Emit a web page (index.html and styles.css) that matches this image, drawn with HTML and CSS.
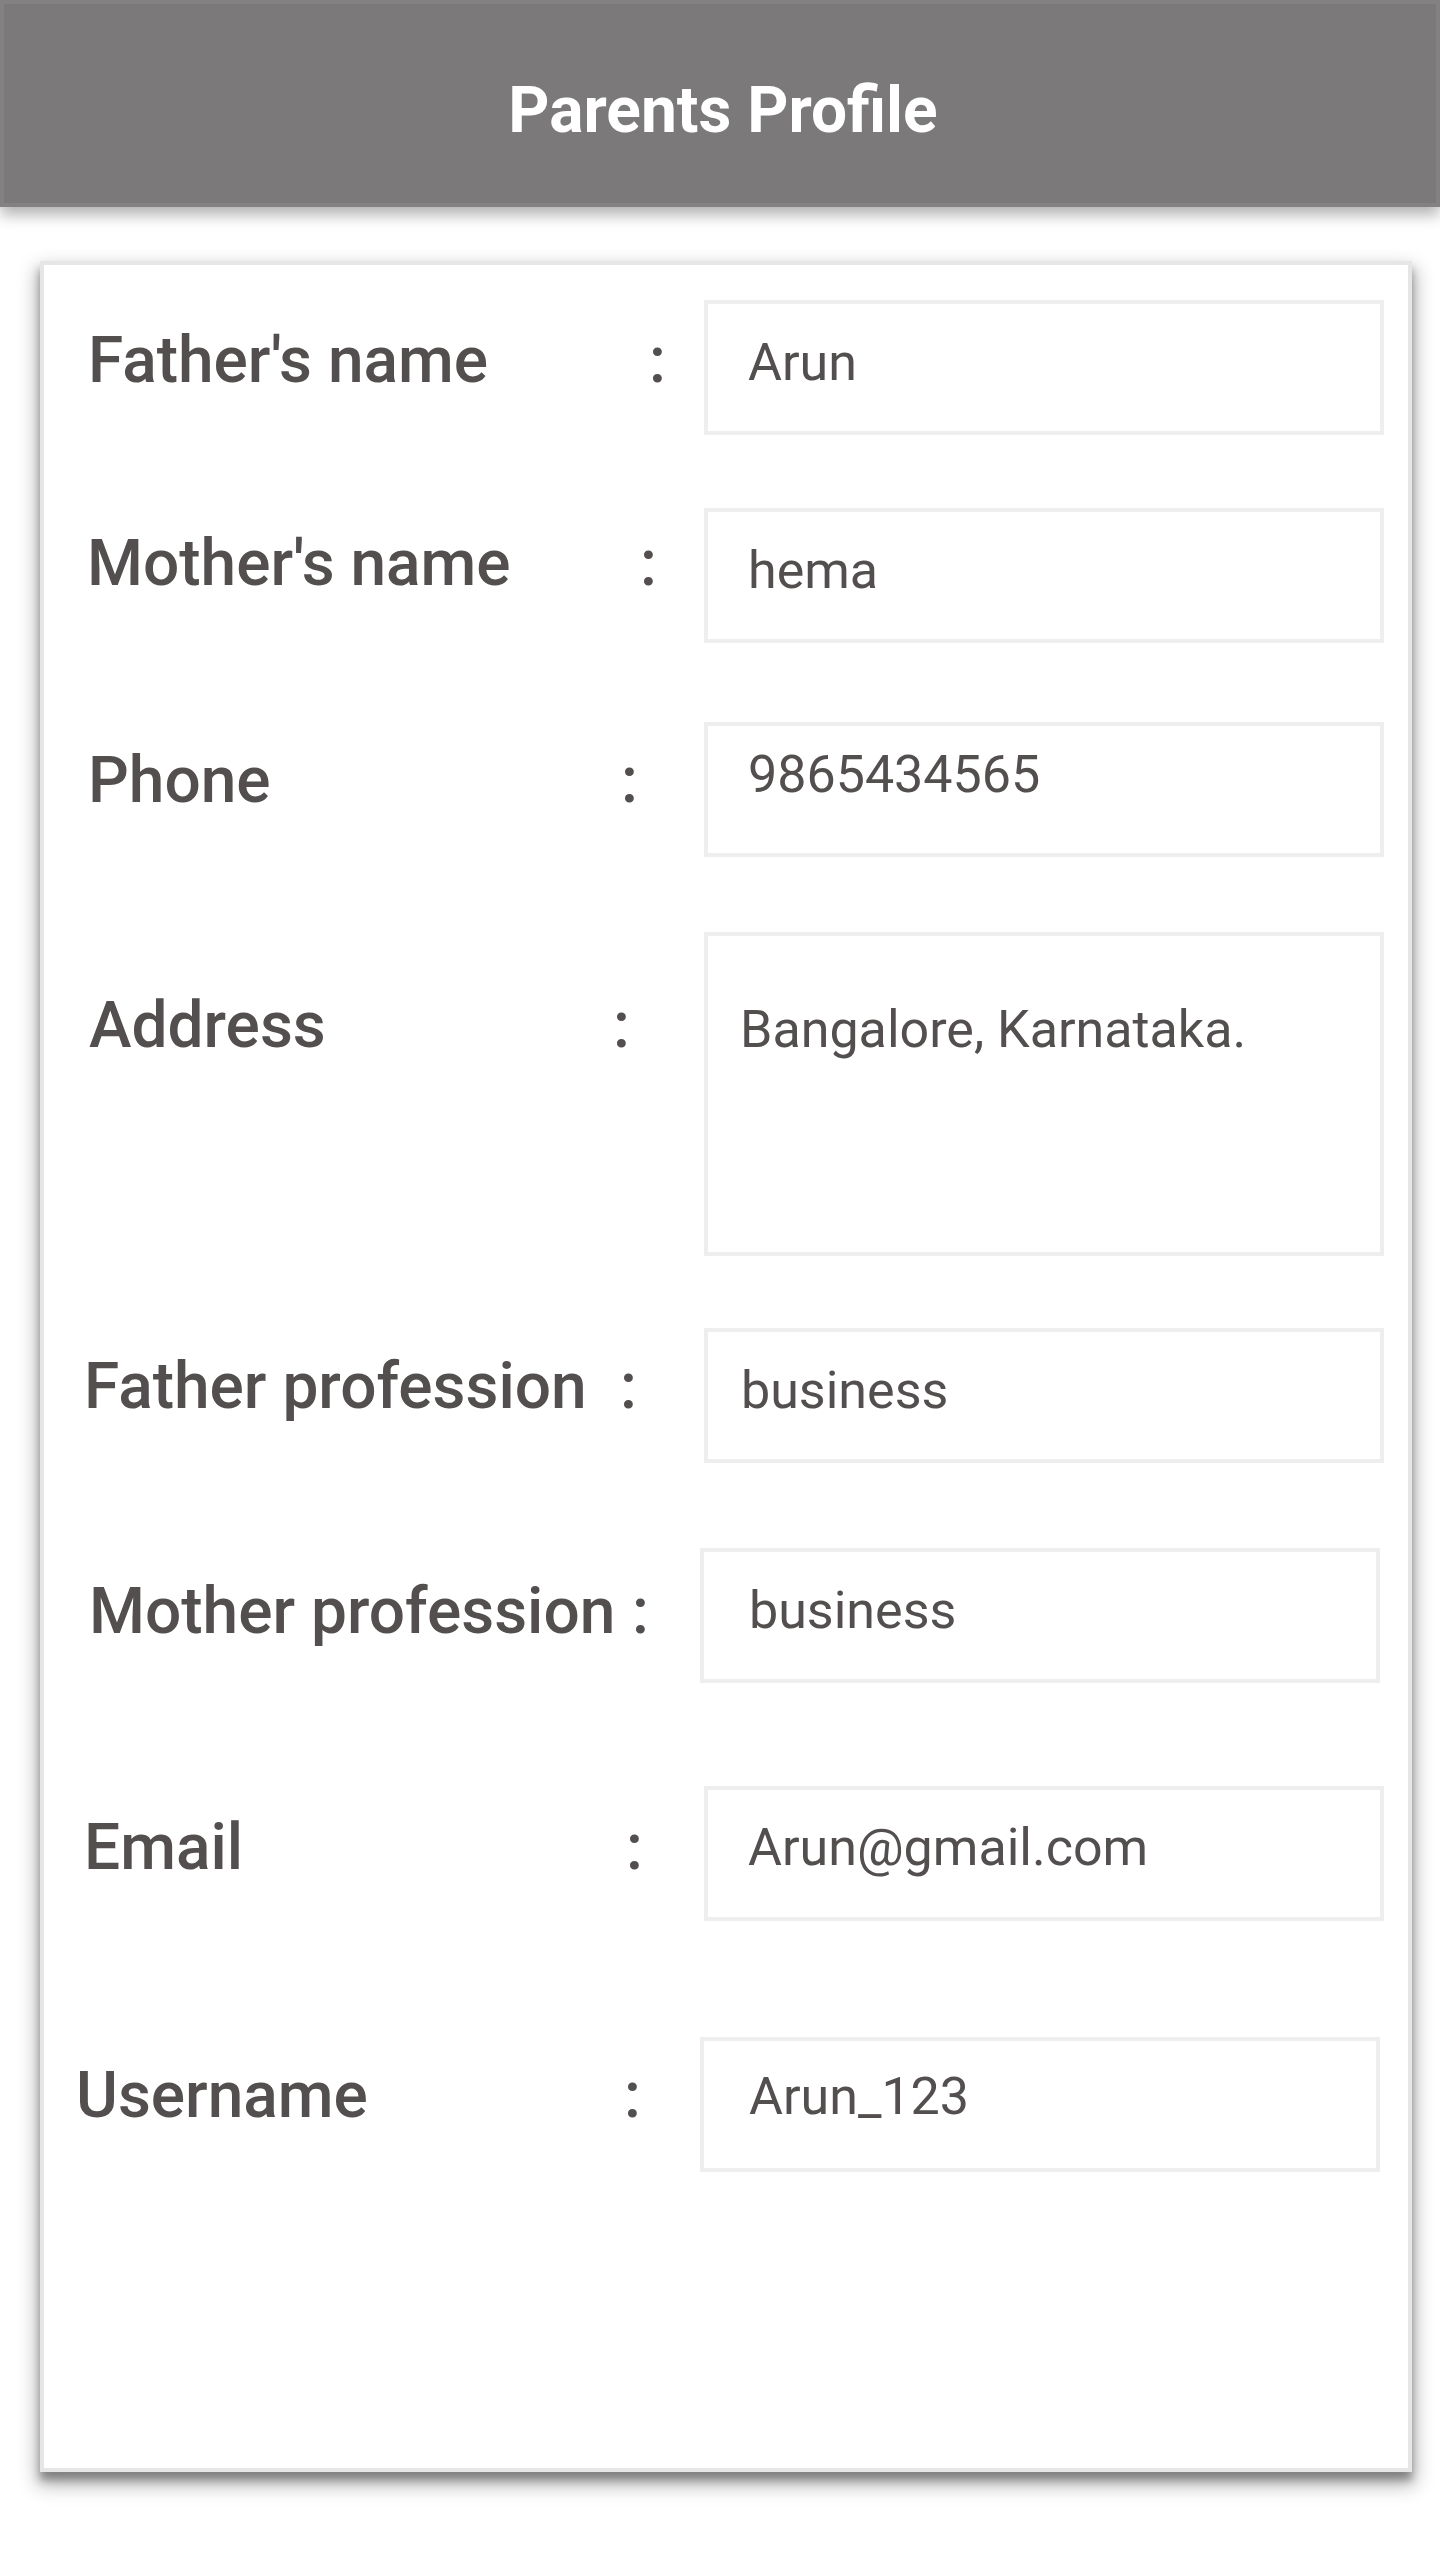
FILE: index.html
```html
<!DOCTYPE html>
<html lang="en">
<head>
<meta charset="utf-8">
<title>Parents Profile</title>
<link rel="stylesheet" href="styles.css">
</head>
<body>
<header class="appbar">
  <h1 class="appbar-title">Parents Profile</h1>
</header>
<main class="card">
  <div class="row r1">
    <span class="label">Father's name</span><span class="colon">:</span>
    <div class="field">Arun</div>
  </div>
  <div class="row r2">
    <span class="label">Mother's name</span><span class="colon">:</span>
    <div class="field">hema</div>
  </div>
  <div class="row r3">
    <span class="label">Phone</span><span class="colon">:</span>
    <div class="field">9865434565</div>
  </div>
  <div class="row r4">
    <span class="label">Address</span><span class="colon">:</span>
    <div class="field field-multi">Bangalore, Karnataka.</div>
  </div>
  <div class="row r5">
    <span class="label">Father profession</span><span class="colon">:</span>
    <div class="field">business</div>
  </div>
  <div class="row r6">
    <span class="label">Mother profession</span><span class="colon">:</span>
    <div class="field">business</div>
  </div>
  <div class="row r7">
    <span class="label">Email</span><span class="colon">:</span>
    <div class="field">Arun@gmail.com</div>
  </div>
  <div class="row r8">
    <span class="label">Username</span><span class="colon">:</span>
    <div class="field">Arun_123</div>
  </div>
</main>
</body>
</html>
```

FILE: styles.css
```css
* { box-sizing: border-box; }

html, body {
  margin: 0;
  padding: 0;
  background: #ffffff;
}

body {
  font-family: Roboto, "Liberation Sans", Arial, sans-serif;
  color: #524f4e;
  min-height: 2560px;
  padding-bottom: 88px;
}

.appbar {
  height: 207px;
  background: #7b7979;
  border: 4px solid #838181;
  box-shadow: 0 8px 14px rgba(0, 0, 0, 0.3);
  padding-top: 69px;
  padding-left: 6px;
  text-align: center;
  position: relative;
  z-index: 1;
}

.appbar-title {
  margin: 0;
  font-size: 64px;
  line-height: 75px;
  font-weight: 700;
  color: #ffffff;
}

.card {
  display: block;
  margin: 54px 0 0 40px;
  width: 1372px;
  height: 2211px;
  background: #ffffff;
  border: 4px solid #e6e6e6;
  box-shadow: 0 10px 18px 3px rgba(0, 0, 0, 0.3), 0 8px 8px rgba(0, 0, 0, 0.3);
  padding-top: 35px;
}

.row {
  display: flex;
  align-items: flex-start;
}

.label,
.colon {
  flex: none;
  font-size: 64px;
  line-height: 75px;
  font-weight: 500;
  white-space: nowrap;
  padding-top: 21px;
}

.colon {
  width: 16px;
  text-align: center;
}

.field {
  flex: none;
  width: 680px;
  height: 135px;
  margin-left: auto;
  margin-right: 24px;
  border: 4px solid #eeeeee;
  padding: 28px 0 0 40px;
  font-size: 52px;
  line-height: 62px;
  font-weight: 400;
  white-space: nowrap;
}

.field-multi {
  height: 324px;
  padding-top: 63px;
  padding-left: 32px;
}

.r1 .label,
.r1 .colon { padding-top: 23px; }
.r1 .label { margin-left: 44px; width: 561px; }

.r2 { margin-top: 73px; }
.r2 .label,
.r2 .colon { padding-top: 18px; }
.r2 .label { margin-left: 43px; width: 553px; }

.r3 { margin-top: 79px; }
.r3 .label { margin-left: 44px; width: 533px; }
.r3 .field { padding-top: 18px; }

.r4 { margin-top: 75px; }
.r4 .label,
.r4 .colon { padding-top: 56px; }
.r4 .label { margin-left: 45px; width: 524px; }

.r5 { margin-top: 72px; }
.r5 .label { margin-left: 40px; width: 536px; }
.r5 .field { padding-left: 33px; }

.r6 { margin-top: 85px; }
.r6 .label,
.r6 .colon { padding-top: 26px; }
.r6 .label { margin-left: 45px; width: 543px; }
.r6 .field { margin-right: 28px; padding-left: 45px; }

.r7 { margin-top: 103px; }
.r7 .label,
.r7 .colon { padding-top: 24px; }
.r7 .label { margin-left: 40px; width: 542px; }
.r7 .field { padding-top: 27px; }

.r8 { margin-top: 116px; }
.r8 .label { margin-left: 32px; width: 548px; }
.r8 .field { margin-right: 28px; padding-left: 45px; padding-top: 25px; }
```
